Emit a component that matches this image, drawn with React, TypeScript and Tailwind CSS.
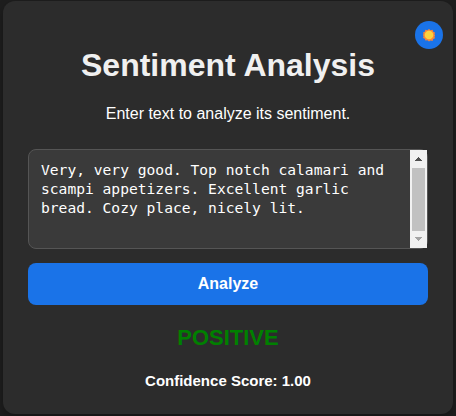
function SunIcon() {
  return (
    <svg width="14" height="14" viewBox="0 0 14 14" aria-hidden="true">
      <path
        fill="#f7863b"
        d="M7 .9l1.600 1.300 2-.4.6 1.900 1.800.9-.5 1.800.6 1-.6 1.200.5 1.700-1.800.8-.6 1.900-2-.4L7 13.500l-1.600-1.300-2 .4-.6-1.900-1.800-.8.5-1.700L.9 7l.6-1L1 4.600l1.800-.9.6-1.900 2 .4z"
      />
      <circle cx="7" cy="7" r="4.300" fill="#fdd23e" />
    </svg>
  );
}

function ScrollBar() {
  return (
    <div className="flex h-[98px] w-[17px] shrink-0 flex-col items-center bg-[#f1f1f1]">
      <svg width="17" height="18" shapeRendering="crispEdges" aria-hidden="true">
        <path fill="#505050" d="M8 7h1v1h1v1h1v1h1v1H5v-1h1V9h1V8h1z" />
      </svg>
      <div className="h-[63px] w-[13px] bg-[#c1c1c1]" />
      <svg width="17" height="17" shapeRendering="crispEdges" aria-hidden="true">
        <path fill="#a3a3a3" d="M5 6h7v1h-1v1h-1v1H9v1H8V9H7V8H6V7H5z" />
      </svg>
    </div>
  );
}

export default function App() {
  return (
    <div className="h-[416px] w-[456px] bg-[#1e1e1e] px-[3px] pt-px font-['Liberation_Sans',Arial,sans-serif] text-white">
      <main className="relative flex h-[413px] w-[450px] flex-col items-center rounded-xl bg-[#2c2c2c] px-[25px] pt-[46px] shadow-[0_4px_10px_rgba(0,0,0,0.3)]">
        <button
          aria-label="Toggle theme"
          className="absolute top-5 right-[10px] flex size-7 items-center justify-center rounded-full bg-[#1a73e8]"
        >
          <SunIcon />
        </button>
        <h1 className="text-[32px] leading-[37px] font-bold text-[#f0f0f0]">Sentiment Analysis</h1>
        <p className="mt-[21px] text-base leading-[18px]">Enter text to analyze its sentiment.</p>
        <div className="mt-[26px] flex h-[100px] w-[400px] justify-between rounded-lg border border-[#555] bg-[#3a3a3a]">
          <p className="pt-[10px] pl-3 font-['DejaVu_Sans_Mono',monospace] text-[14.62px] leading-[19px] whitespace-nowrap">
            Very, very good. Top notch calamari and
            <br />
            scampi appetizers. Excellent garlic
            <br />
            bread. Cozy place, nicely lit.
          </p>
          <ScrollBar />
        </div>
        <button className="mt-[14px] h-[42px] w-full rounded-lg bg-[#1a73e8] text-base leading-[18px] font-bold">
          Analyze
        </button>
        <p className="mt-5 text-[22px] leading-[25px] font-bold text-[#008000]">POSITIVE</p>
        <p className="mt-[22px] text-[15px] leading-[18px] font-bold">Confidence Score: 1.00</p>
      </main>
    </div>
  );
}
